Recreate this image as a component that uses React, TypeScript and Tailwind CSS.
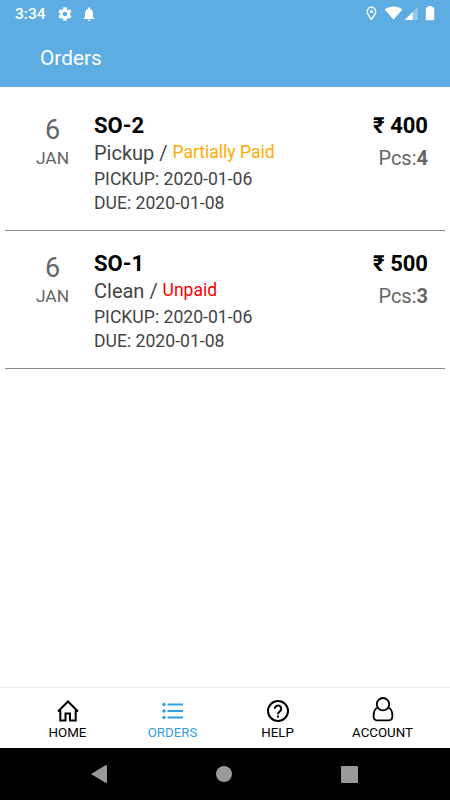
import React from 'react';

interface Order {
  id: string;
  day: string;
  month: string;
  stage: string;
  status: string;
  statusColor: string;
  pickup: string;
  due: string;
  amount: string;
  pieces: number;
}

const orders: Order[] = [
  {
    id: 'SO-2',
    day: '6',
    month: 'JAN',
    stage: 'Pickup',
    status: 'Partially Paid',
    statusColor: 'text-[#ffab00]',
    pickup: '2020-01-06',
    due: '2020-01-08',
    amount: '400',
    pieces: 4,
  },
  {
    id: 'SO-1',
    day: '6',
    month: 'JAN',
    stage: 'Clean',
    status: 'Unpaid',
    statusColor: 'text-[#ff0000]',
    pickup: '2020-01-06',
    due: '2020-01-08',
    amount: '500',
    pieces: 3,
  },
];

const StatusBar: React.FC = () => (
  <div className="flex h-[27px] items-center justify-between px-[15px] text-white">
    <div className="flex items-center">
      <span className="w-[42px] text-[15.5px] font-medium leading-7">3:34</span>
      <svg className="h-4 w-4" viewBox="0 0 24 24" fill="currentColor">
        <path d="M19.4 13c.04-.3.07-.64.07-1s-.03-.7-.07-1l2.1-1.6c.2-.15.24-.42.12-.64l-2-3.46c-.12-.22-.39-.3-.61-.22l-2.49 1a7.3 7.3 0 0 0-1.69-.98l-.38-2.65A.49.49 0 0 0 13.97 2h-4c-.25 0-.46.18-.49.42L9.1 5.07c-.61.25-1.17.59-1.69.98l-2.49-1c-.23-.09-.49 0-.61.22l-2 3.46c-.13.22-.07.49.12.64L4.54 11c-.04.3-.07.65-.07 1s.03.68.07 1l-2.11 1.63c-.19.15-.24.42-.12.64l2 3.46c.12.22.39.3.61.22l2.49-1c.52.4 1.08.73 1.69.98l.38 2.65c.03.24.24.42.49.42h4c.25 0 .46-.18.49-.42l.38-2.65c.61-.25 1.17-.59 1.69-.98l2.49 1c.23.09.49 0 .61-.22l2-3.46c.12-.22.07-.49-.12-.64L19.4 13zM12 15.5a3.5 3.5 0 1 1 0-7 3.5 3.5 0 0 1 0 7z" />
      </svg>
      <svg className="ml-2 h-4 w-4" viewBox="0 0 24 24" fill="currentColor">
        <path d="M12 22.5a2 2 0 0 0 2-2h-4a2 2 0 0 0 2 2zm6-6v-5.5c0-3.3-1.7-5.8-4.5-6.5V3.5a1.5 1.5 0 0 0-3 0v1C7.7 5.2 6 7.7 6 11v5.5l-2 1.8v1.2h16v-1.2z" />
      </svg>
    </div>
    {/* location, wifi, signal, battery */}
    <svg className="h-4 w-[69px]" viewBox="0 0 69 16" fill="currentColor">
      <path
        fillRule="evenodd"
        d="M5.500.6A4.900 4.900 0 0 0 .6 5.500C.6 9.100 5.500 14.300 5.500 14.300s4.900-5.200 4.900-8.800A4.900 4.900 0 0 0 5.500.6zm0 1.400A3.500 3.500 0 0 1 9 5.500c0 1.900-1.900 4.700-3.500 6.600C3.900 10.200 2 7.400 2 5.500A3.500 3.500 0 0 1 5.500 2zm0 1.900a1.700 1.700 0 1 0 0 3.400 1.700 1.700 0 0 0 0-3.400z"
      />
      <path d="M18.700 3.600C23.500-.7 31.500-.7 36.300 3.600L27.500 13.800z" />
      <path d="M51.700 1v13H38.700z" opacity=".35" />
      <path d="M46.700 6v8h-8z" />
      <path d="M62.200 1.200V0h3.600v1.200h1.600q.8 0 .8.800v11.500q0 .8-.8.800h-6.800q-.8 0-.8-.8V2q0-.8.8-.8z" />
    </svg>
  </div>
);

const Header: React.FC = () => (
  <header className="h-[87px] bg-[#5dade2]">
    <StatusBar />
    <h1 className="pl-10 pt-[15px] text-[20.8px] leading-8 text-white">Orders</h1>
  </header>
);

const OrderRow: React.FC<{ order: Order }> = ({ order }) => (
  <li className="mx-[5px] flex h-full border-b border-[#888888]">
    <div className="flex w-[95px] flex-col items-center pt-[15px] text-[#666666]">
      <span className="text-[27px] leading-8">{order.day}</span>
      <span className="text-[17.4px] leading-6">{order.month}</span>
    </div>
    <div className="-ml-[6px] flex-1 pt-[13px] text-[#444444]">
      <h2 className="text-[22px] font-bold leading-[27px] text-black">{order.id}</h2>
      <p className="flex h-7 whitespace-pre leading-7">
        <span className="text-[20px]">{order.stage} / </span>
        <span className={`-mt-px text-[17.5px] ${order.statusColor}`}>{order.status}</span>
      </p>
      <p className="text-[17.6px] leading-6">PICKUP: {order.pickup}</p>
      <p className="text-[17.6px] leading-6">DUE: {order.due}</p>
    </div>
    <div className="flex flex-col items-end pr-[17px] pt-[13px]">
      <p className="text-[22px] font-bold leading-[27px] text-black">₹ {order.amount}</p>
      <p className="mt-[5px] text-[20px] leading-7 text-[#666666]">
        Pcs:<b>{order.pieces}</b>
      </p>
    </div>
  </li>
);

const HomeIcon = () => (
  <svg className="h-7 w-7" viewBox="0 0 28 28" fill="none" stroke="currentColor" strokeWidth="2">
    <path d="M4 14.500 14 4.500l10 10M6.300 12.500V23.500h5.200v-7h4.500v7h5.700V12.500" />
  </svg>
);

const ListIcon = () => (
  <svg className="h-7 w-7" viewBox="0 0 28 28" fill="currentColor">
    <circle cx="5" cy="7.500" r="1.700" />
    <circle cx="5" cy="14" r="1.700" />
    <circle cx="5" cy="20.500" r="1.700" />
    <path d="M8.500 6.500H24v2H8.500zM8.500 13H24v2H8.500zM8.500 19.500H24v2H8.500z" />
  </svg>
);

const HelpIcon = () => (
  <svg className="h-7 w-7" viewBox="0 0 28 28" fill="none" stroke="currentColor" strokeWidth="2">
    <circle cx="14" cy="14" r="10" />
    <path d="M10.800 11.700a3.200 3.200 0 1 1 5.600 2.100C15.400 14.800 14 15.400 14 17.200M14 18.500v2" />
  </svg>
);

const AccountIcon = () => (
  <svg className="h-7 w-7" viewBox="0 0 28 28" fill="none" stroke="currentColor" strokeWidth="1.800">
    <circle cx="14" cy="7.200" r="6.200" />
    <path d="M8.800 10.500C5.500 11.700 4.600 15.200 4.600 19c0 3 1 4.300 3.400 4.300h12c2.400 0 3.400-1.300 3.400-4.300 0-3.800-.9-7.300-4.200-8.500" />
  </svg>
);

const tabs = [
  { label: 'HOME', icon: HomeIcon, active: false },
  { label: 'ORDERS', icon: ListIcon, active: true },
  { label: 'HELP', icon: HelpIcon, active: false },
  { label: 'ACCOUNT', icon: AccountIcon, active: false },
];

const TabBar: React.FC = () => (
  <nav className="grid h-[61px] grid-cols-4 border-t border-[#f0f0f0] px-[15px] pt-[9px]">
    {tabs.map(({ label, icon: Icon, active }) => (
      <button
        key={label}
        className={`flex flex-col items-center ${active ? 'text-[#349fde]' : 'text-black'}`}
      >
        <Icon />
        <span className="text-[13.3px] leading-4">{label}</span>
      </button>
    ))}
  </nav>
);

const SystemNav: React.FC = () => (
  <div className="flex h-[52px] items-center justify-between bg-black pl-[91px] pr-[92px] text-[#999999]">
    <svg className="h-[18px] w-4" viewBox="0 0 16 18" fill="currentColor">
      <path d="M0 9 14.500.300q1.500-.6 1.500.7v16q0 1.300-1.500.7z" />
    </svg>
    <span className="h-4 w-4 rounded-full bg-[#999999]" />
    <span className="h-[17px] w-[17px] rounded-[1px] bg-[#999999]" />
  </div>
);

const App: React.FC = () => (
  <div className="flex h-[800px] w-[450px] flex-col bg-white font-[Roboto,sans-serif]">
    <Header />
    <main className="flex-1 pt-[12px]">
      <ul className="grid auto-rows-[132px] gap-[6px]">
        {orders.map((order) => (
          <OrderRow key={order.id} order={order} />
        ))}
      </ul>
    </main>
    <TabBar />
    <SystemNav />
  </div>
);

export default App;
